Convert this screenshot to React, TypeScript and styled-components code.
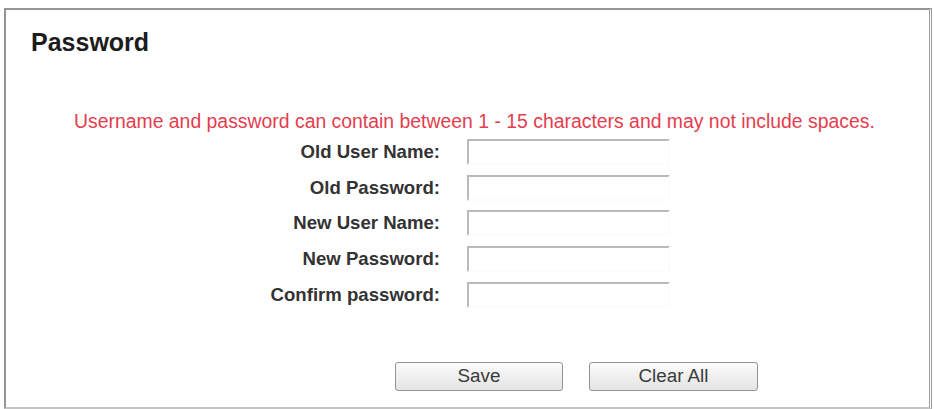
import React from "react";
import styled, { createGlobalStyle } from "styled-components";

const fields = [
  "Old User Name:",
  "Old Password:",
  "New User Name:",
  "New Password:",
  "Confirm password:",
];

const GlobalStyle = createGlobalStyle`
  html, body {
    margin: 0;
    padding: 0;
    background: #fff;
  }
  body {
    font-family: "Liberation Sans", Arial, sans-serif;
  }
`;

const Frame = styled.div`
  box-sizing: border-box;
  margin: 8px 2px 0 4px;
  height: 401px;
  border: 2px solid #969696;
  border-bottom-color: #c4c4c4;
  border-right: 3px double #9a9a9a;
  background: #fff;
  padding-top: 20px;
`;

const Title = styled.h1`
  margin: 0;
  padding-left: 25px;
  font-size: 25px;
  line-height: 25px;
  font-weight: bold;
  color: #1c1c1c;
`;

const Notice = styled.p`
  margin: 56px 0 0;
  padding-left: 68px;
  font-size: 19.4px;
  line-height: 20px;
  color: #e43d4e;
  white-space: nowrap;
`;

const Form = styled.div`
  display: grid;
  grid-template-columns: 434px 203px;
  grid-auto-rows: 35.75px;
  column-gap: 27px;
  align-items: center;
  margin-top: 3px;
`;

const Label = styled.label`
  text-align: right;
  font-size: 18.6px;
  font-weight: bold;
  color: #333;
  white-space: nowrap;
`;

const Field = styled.input`
  box-sizing: border-box;
  width: 203px;
  height: 26px;
  margin: 0;
  padding: 2px 4px;
  border: 2px solid;
  border-color: #b9b9b9 #fcfcfc #fcfcfc #b9b9b9;
  background: #fff;
  outline: none;
  font-family: inherit;
  font-size: 16px;
`;

const Actions = styled.div`
  display: flex;
  gap: 26px;
  padding-left: 389px;
  margin-top: 49px;
`;

const Button = styled.button<{ $width: number }>`
  box-sizing: border-box;
  width: ${(p) => p.$width}px;
  height: 29px;
  border: 1.5px solid #939393;
  border-radius: 3px;
  background: linear-gradient(#fbfbfb, #e4e4e4);
  color: #3a3a3a;
  font-family: inherit;
  font-size: 18.8px;
  line-height: 1;
  padding: 0;
  cursor: pointer;
`;

const App = () => (
  <>
    <GlobalStyle />
    <Frame>
      <Title>Password</Title>
      <Notice>
        Username and password can contain between 1 - 15 characters and may
        not include spaces.
      </Notice>
      <Form>
        {fields.map((label) => (
          <React.Fragment key={label}>
            <Label>{label}</Label>
            <Field type={label.toLowerCase().includes("password") ? "password" : "text"} />
          </React.Fragment>
        ))}
      </Form>
      <Actions>
        <Button $width={168}>Save</Button>
        <Button $width={169}>Clear All</Button>
      </Actions>
    </Frame>
  </>
);

export default App;
